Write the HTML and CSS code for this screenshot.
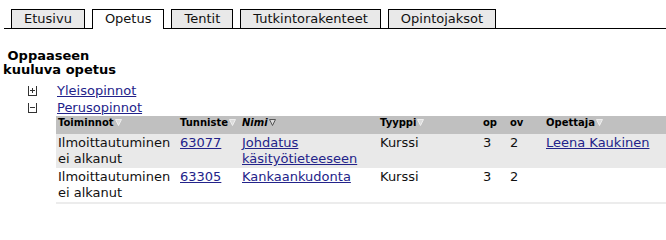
FILE: index.html
```html
<!DOCTYPE html>
<html lang="fi">
<head>
<meta charset="utf-8">
<title>Opetus</title>
<link rel="stylesheet" href="styles.css">
</head>
<body>
<div class="tabbar">
  <span class="tab">Etusivu</span>
  <span class="tab tab-active">Opetus</span>
  <span class="tab">Tentit</span>
  <span class="tab">Tutkintorakenteet</span>
  <span class="tab">Opintojaksot</span>
</div>

<h2 class="heading">&nbsp;Oppaaseen<br>kuuluva opetus</h2>

<ul class="tree">
  <li class="tree-item">
    <svg class="tree-icon" width="9" height="10" viewBox="0 0 9 10"><path d="M0.5 0V10M8.5 0V10M0 9.5H9M2 4.5H7M4.5 2V7" stroke="#333" stroke-width="1" fill="none"/></svg>
    <a href="#" class="link">Yleisopinnot</a>
  </li>
  <li class="tree-item">
    <svg class="tree-icon" width="9" height="10" viewBox="0 0 9 10"><path d="M0.5 0V10M8.5 0V10M0 9.5H9M2 4.5H7" stroke="#333" stroke-width="1" fill="none"/></svg>
    <a href="#" class="link">Perusopinnot</a>
  </li>
</ul>

<table class="grid">
  <colgroup>
    <col class="c1"><col class="c2"><col class="c3"><col class="c4"><col class="c5"><col class="c6"><col class="c7">
  </colgroup>
  <thead>
    <tr>
      <th>Toiminnot<svg class="sort" width="7" height="7" viewBox="0 0 7 7"><path d="M0.5 0.5H6.5L3.5 6.5Z" fill="#dcdcdc" stroke="#eeeeee"/></svg></th>
      <th>Tunniste<svg class="sort" width="7" height="7" viewBox="0 0 7 7"><path d="M0.5 0.5H6.5L3.5 6.5Z" fill="#dcdcdc" stroke="#eeeeee"/></svg></th>
      <th><em>Nimi</em><svg class="sort" width="7" height="7" viewBox="0 0 7 7"><path d="M0.5 0.5H6.5L3.5 6.5Z" fill="#d8d8d8" stroke="#555555"/></svg></th>
      <th>Tyyppi<svg class="sort" width="7" height="7" viewBox="0 0 7 7"><path d="M0.5 0.5H6.5L3.5 6.5Z" fill="#dcdcdc" stroke="#eeeeee"/></svg></th>
      <th>op</th>
      <th>ov</th>
      <th>Opettaja<svg class="sort" width="7" height="7" viewBox="0 0 7 7"><path d="M0.5 0.5H6.5L3.5 6.5Z" fill="#dcdcdc" stroke="#eeeeee"/></svg></th>
    </tr>
  </thead>
  <tbody>
    <tr class="row-alt">
      <td>Ilmoittautuminen ei alkanut</td>
      <td><a href="#" class="link">63077</a></td>
      <td><a href="#" class="link">Johdatus käsityötieteeseen</a></td>
      <td>Kurssi</td>
      <td>3</td>
      <td>2</td>
      <td><a href="#" class="link">Leena Kaukinen</a></td>
    </tr>
    <tr class="row">
      <td>Ilmoittautuminen ei alkanut</td>
      <td><a href="#" class="link">63305</a></td>
      <td><a href="#" class="link">Kankaankudonta</a></td>
      <td>Kurssi</td>
      <td>3</td>
      <td>2</td>
      <td></td>
    </tr>
  </tbody>
</table>
</body>
</html>
```

FILE: styles.css
```css
html, body {
  background: #ffffff;
}
body {
  margin: 0 0 0 3px;
  font-family: "DejaVu Sans", Verdana, sans-serif;
  font-size: 13px;
  line-height: 16px;
  color: #111111;
  overflow: hidden;
}

.tabbar {
  display: flex;
  align-items: flex-end;
  gap: 7px;
  margin: 0 0 0 1px;
  padding: 9px 0 0 7px;
  border-bottom: 1px solid #000000;
}
.tab {
  display: block;
  padding: 1px 12px 1px;
  border: 1px solid #000000;
  border-bottom: none;
  background: #e9e9e9;
  color: #111111;
  white-space: nowrap;
}
.tab-active {
  background: #ffffff;
  padding-bottom: 2px;
  margin-bottom: -1px;
}

.heading {
  margin: 20px 0 0 0;
  font-size: 13px;
  font-weight: bold;
  line-height: 14px;
  color: #000000;
}

.tree {
  list-style: none;
  margin: 5px 0 0 0;
  padding: 0 0 0 25px;
}
.tree-item {
  display: flex;
  align-items: flex-start;
  line-height: 17px;
  height: 17px;
}
.tree-icon {
  display: block;
  margin: 4px 20px 0 0;
  flex: none;
}

.link {
  color: #23238a;
  text-decoration: underline;
}

.grid {
  margin: 0 0 0 53px;
  width: 610px;
  table-layout: fixed;
  border-collapse: collapse;
  border-bottom: 2px solid #ececec;
}
.c1 { width: 122px; }
.c2 { width: 62px; }
.c3 { width: 138px; }
.c4 { width: 103px; }
.c5 { width: 27px; }
.c6 { width: 36px; }
.c7 { width: 122px; }

.grid th {
  background: #c0c0c0;
  font-size: 10px;
  line-height: 12px;
  font-weight: bold;
  text-align: left;
  padding: 1px 2px 5px;
  color: #000000;
  white-space: nowrap;
}
.grid th em {
  font-style: italic;
}
.sort {
  margin-left: 1px;
  vertical-align: 0px;
}
.grid td {
  padding: 1px 2px;
  vertical-align: top;
  line-height: 16px;
}
.row-alt td {
  background: #e9e9e9;
  padding-top: 1px;
  padding-bottom: 1px;
}
.row td {
  background: #ffffff;
}
```
